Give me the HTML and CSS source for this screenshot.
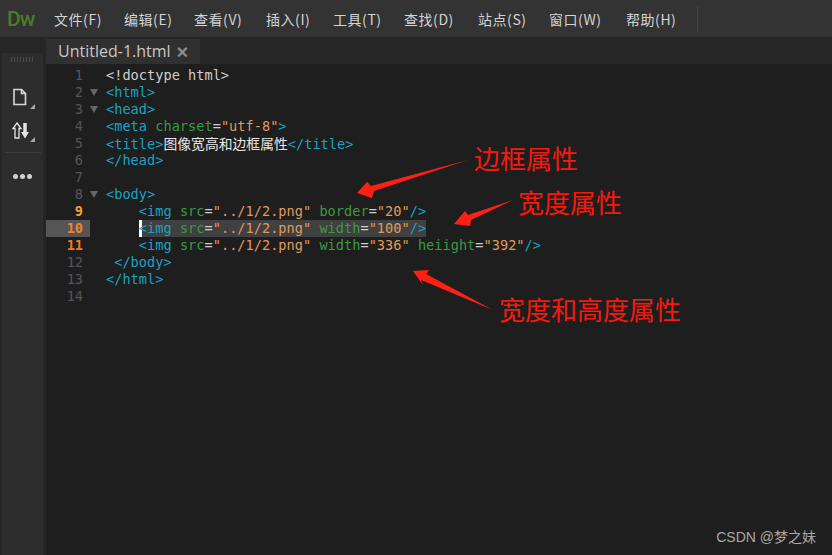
FILE: index.html
```html
<!DOCTYPE html>
<html lang="zh-CN">
<head>
<meta charset="utf-8">
<title>Dreamweaver</title>
<link rel="stylesheet" href="styles.css">
</head>
<body>
<div class="app">
  <header class="menubar">
    <span class="logo">Dw</span>
    <nav class="menu">
      <span class="m1">文件(F)</span>
      <span class="m2">编辑(E)</span>
      <span class="m3">查看(V)</span>
      <span class="m4">插入(I)</span>
      <span class="m5">工具(T)</span>
      <span class="m6">查找(D)</span>
      <span class="m7">站点(S)</span>
      <span class="m8">窗口(W)</span>
      <span class="m9">帮助(H)</span>
    </nav>
    <span class="sep"></span>
  </header>
  <div class="main">
    <aside class="side">
      <div class="panel">
        <div class="grip"></div>
        <svg class="tool tool-file" width="16" height="18" viewBox="0 0 16 18"><path d="M2 1.500h7.500l4 4v11h-11.500z" fill="none" stroke="#d8d8d8" stroke-width="1.600"/><path d="M9.500 1.500v4h4" fill="none" stroke="#d8d8d8" stroke-width="1.600"/></svg>
        <svg class="corner c1" width="5" height="5" viewBox="0 0 5 5"><path d="M5 0v5h-5z" fill="#aaa"/></svg>
        <svg class="tool tool-sort" width="19" height="17" viewBox="0 0 19 17"><path d="M5 1 9 6.500H7V16H3V6.500H1z" fill="none" stroke="#e4e4e4" stroke-width="1.300"/><path d="M13 1v10" stroke="#e4e4e4" stroke-width="3.500"/><path d="M9 10h8l-4 6.500z" fill="#e4e4e4"/></svg>
        <svg class="corner c2" width="5" height="5" viewBox="0 0 5 5"><path d="M5 0v5h-5z" fill="#aaa"/></svg>
        <div class="rule"></div>
        <div class="dots"><i></i><i></i><i></i></div>
      </div>
    </aside>
    <section class="doc">
      <div class="tabs"><div class="tab">Untitled-1.html<span class="close">×</span></div></div>
      <div class="editor">
<div class="line"><span class="num">1</span><span class="fold"></span><code class="w">&lt;!doctype html&gt;</code></div>
<div class="line"><span class="num">2</span><span class="fold on"></span><code class="t">&lt;html&gt;</code></div>
<div class="line"><span class="num">3</span><span class="fold on"></span><code class="t">&lt;head&gt;</code></div>
<div class="line"><span class="num">4</span><span class="fold"></span><code><span class="t">&lt;meta</span> <span class="a">charset</span><span class="w">=</span><span class="s">"utf-8"</span><span class="t">&gt;</span></code></div>
<div class="line"><span class="num">5</span><span class="fold"></span><code><span class="t">&lt;title&gt;</span><span class="cjk">图像宽高和边框属性</span><span class="t">&lt;/title&gt;</span></code></div>
<div class="line"><span class="num">6</span><span class="fold"></span><code class="t">&lt;/head&gt;</code></div>
<div class="line"><span class="num">7</span><span class="fold"></span><code></code></div>
<div class="line"><span class="num">8</span><span class="fold on"></span><code class="t">&lt;body&gt;</code></div>
<div class="line"><span class="num hot1">9</span><span class="fold"></span><code>    <span class="t">&lt;img</span> <span class="a">src</span><span class="w">=</span><span class="s">"../1/2.png"</span> <span class="a">border</span><span class="w">=</span><span class="s">"20"</span><span class="t">/&gt;</span></code></div>
<div class="line"><span class="num hot2 cur">10</span><span class="fold"></span><code>    <span class="sel"><span class="t">&lt;img</span> <span class="a">src</span><span class="w">=</span><span class="s">"../1/2.png"</span> <span class="a">width</span><span class="w">=</span><span class="s">"100"</span><span class="t">/&gt;</span></span></code></div>
<div class="line"><span class="num hot3">11</span><span class="fold"></span><code>    <span class="t">&lt;img</span> <span class="a">src</span><span class="w">=</span><span class="s">"../1/2.png"</span> <span class="a">width</span><span class="w">=</span><span class="s">"336"</span> <span class="a">heiight</span><span class="w">=</span><span class="s">"392"</span><span class="t">/&gt;</span></code></div>
<div class="line"><span class="num">12</span><span class="fold"></span><code class="t"> &lt;/body&gt;</code></div>
<div class="line"><span class="num">13</span><span class="fold"></span><code class="t">&lt;/html&gt;</code></div>
<div class="line"><span class="num">14</span><span class="fold"></span><code></code></div>
      </div>
    </section>
  </div>
  <svg class="arrows" width="832" height="555" viewBox="0 0 832 555">
    <path d="M357 193 367 182 371 186 468 160 374 191 372 198z"/>
    <path d="M454 224 465 211 468 215 513 200 471 220 470 226z"/>
    <path d="M413 271 429 270 426 274 493 310 421 280 423 285z"/>
  </svg>
  <div class="note n1">边框属性</div>
  <div class="note n2">宽度属性</div>
  <div class="note n3">宽度和高度属性</div>
  <div class="mark">CSDN @梦之妹</div>
</div>
</body>
</html>
```
FILE: styles.css
```css
* { box-sizing: border-box; }
html, body { margin: 0; padding: 0; background: #1e1e1e; }
.app {
  position: relative;
  width: 832px;
  height: 555px;
  overflow: hidden;
  display: flex;
  flex-direction: column;
  background: #262626;
}
.menubar {
  height: 38px;
  flex: none;
  display: flex;
  align-items: center;
  background: #333333;
  border-bottom: 1px solid #222;
  padding-left: 7px;
}
.logo {
  width: 47px;
  font: 500 21px/36px Roboto, "Liberation Sans", sans-serif;
  letter-spacing: -1px;
  color: #4d7a2b;
}
.menu {
  display: flex;
  font: 14px/36px "Noto Sans CJK SC", "Noto Sans", sans-serif;
  letter-spacing: 0.55px;
  color: #d4d4d4;
}
.menu span { white-space: nowrap; }
.m1 { width: 70px; }
.m2 { width: 70px; }
.m3 { width: 72px; }
.m4 { width: 67px; }
.m5 { width: 71px; }
.m6 { width: 74px; }
.m7 { width: 71px; }
.m8 { width: 77px; }
.m9 { width: 71px; }
.sep {
  width: 1px;
  height: 26px;
  background: #444;
}
.main { flex: 1; display: flex; min-height: 0; }
.side {
  width: 46px;
  flex: none;
  padding-top: 15px;
  background: #262626;
}
.panel {
  position: relative;
  width: 41px;
  height: 100%;
  margin-left: 2px;
  background: #2d2d2d;
  display: flex;
  flex-direction: column;
  align-items: center;
}
.grip {
  width: 24px;
  height: 5px;
  margin-top: 4px;
  background: repeating-linear-gradient(90deg, #4c4c4c 0 1px, transparent 1px 3px);
}
.tool { display: block; }
.tool-file { margin-top: 26px; margin-right: 6px; }
.tool-sort { margin-top: 16px; margin-right: 3px; }
.corner { position: absolute; }
.c1 { left: 28px; top: 51px; }
.c2 { left: 28px; top: 84px; }
.rule {
  width: 36px;
  height: 1px;
  margin-top: 13px;
  background: #3e3e3e;
}
.dots { display: flex; gap: 2px; margin-top: 21px; }
.dots i { width: 5px; height: 5px; border-radius: 50%; background: #d0d0d0; }
.doc { flex: 1; display: flex; flex-direction: column; min-width: 0; }
.tabs { height: 26px; flex: none; padding-top: 1px; background: #262626; }
.tab {
  display: inline-flex;
  align-items: center;
  width: 154px;
  height: 25px;
  padding-left: 12px;
  background: #303030;
  color: #c8c8c8;
  font: 16px/25px "Open Sans", "Noto Sans", sans-serif;
}
.close {
  margin-left: 6px;
  font: bold 20px/18px "Liberation Sans", sans-serif;
  color: #8c8c8c;
}
.editor {
  flex: 1;
  padding-top: 3px;
  background: #1e1e1e;
  font: 13.6px/17px "DejaVu Sans Mono", monospace;
}
.line { display: flex; height: 17px; }
.num {
  width: 44px;
  flex: none;
  padding-right: 7px;
  text-align: right;
  color: #555;
}
.hot1 { color: #f0a030; font-weight: bold; }
.hot2 { color: #f08030; font-weight: bold; }
.hot3 { color: #f07a20; font-weight: bold; }
.cur { background: #555; }
.fold { width: 16px; flex: none; position: relative; }
.fold.on::after {
  content: "";
  position: absolute;
  left: 0;
  top: 5px;
  border-left: 4.5px solid transparent;
  border-right: 4.5px solid transparent;
  border-top: 7px solid #666;
}
code {
  font: inherit;
  white-space: pre;
  letter-spacing: 0.02px;
}
.t { color: #1ba1c4; }
.a { color: #3c9a40; }
.s { color: #e09a58; }
.w { color: #d0d0d0; }
.cjk {
  color: #e8e8e8;
  font: 13.8px/17px "Noto Sans CJK SC", sans-serif;
}
.sel {
  display: inline-block;
  height: 17px;
  background: #404040;
  box-shadow: inset 3px 0 0 #fff;
}
.arrows { position: absolute; left: 0; top: 0; pointer-events: none; }
.arrows path { fill: #ff2015; }
.note {
  position: absolute;
  color: #f5190e;
  font: 26px/30px "Noto Sans CJK SC", sans-serif;
  white-space: nowrap;
}
.n1 { left: 474px; top: 143px; }
.n2 { left: 518px; top: 187px; }
.n3 { left: 499px; top: 294px; }
.mark {
  position: absolute;
  right: 16px;
  top: 528px;
  color: #a8a8a8;
  font: 14px/18px "Liberation Sans", "Noto Sans CJK SC", sans-serif;
}
```
